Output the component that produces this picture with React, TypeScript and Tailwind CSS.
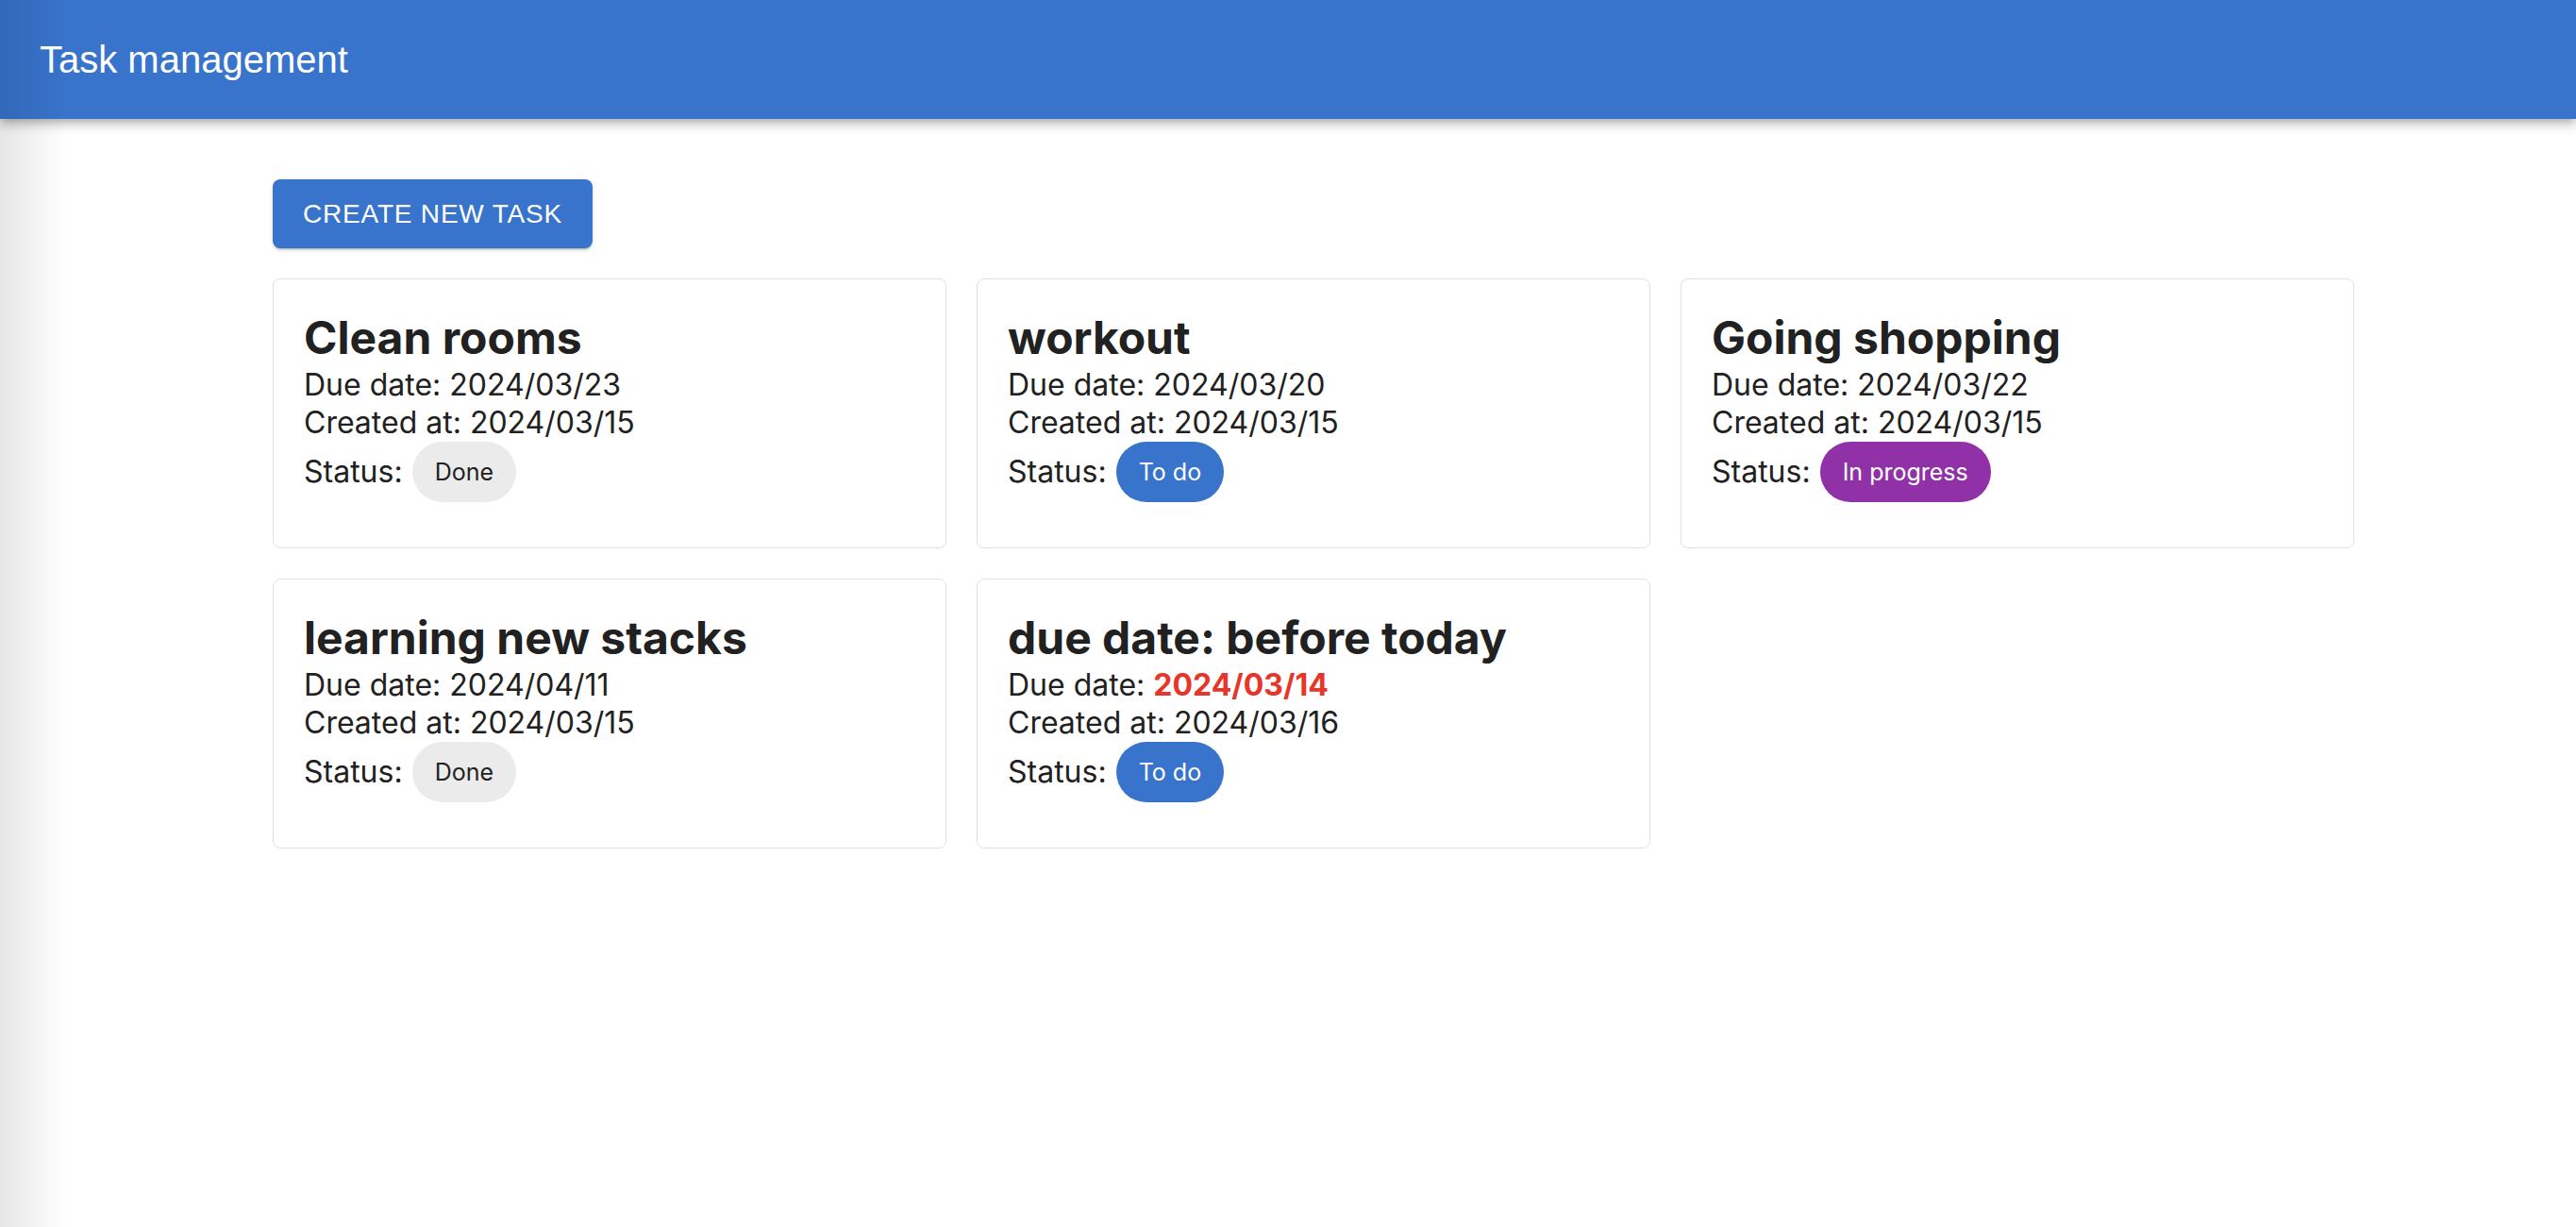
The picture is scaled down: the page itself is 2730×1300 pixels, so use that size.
type Status = 'Done' | 'To do' | 'In progress'

type Task = {
  title: string
  due: string
  created: string
  status: Status
  overdue?: boolean
}

const tasks: Task[] = [
  { title: 'Clean rooms', due: '2024/03/23', created: '2024/03/15', status: 'Done' },
  { title: 'workout', due: '2024/03/20', created: '2024/03/15', status: 'To do' },
  { title: 'Going shopping', due: '2024/03/22', created: '2024/03/15', status: 'In progress' },
  { title: 'learning new stacks', due: '2024/04/11', created: '2024/03/15', status: 'Done' },
  { title: 'due date: before today', due: '2024/03/14', created: '2024/03/16', status: 'To do', overdue: true },
]

const chipStyles: Record<Status, string> = {
  'Done': 'bg-[#ebebeb] text-[#212121]',
  'To do': 'bg-[#3874cc] text-white',
  'In progress': 'bg-[#9131a8] text-white',
}

function StatusChip({ status }: { status: Status }) {
  return (
    <span className={`inline-flex h-16 items-center rounded-full px-6 text-[25px] leading-none ${chipStyles[status]}`}>
      {status}
    </span>
  )
}

function TaskCard({ task }: { task: Task }) {
  return (
    <div className="rounded-lg border border-[#e0e0e0] bg-white px-8 pt-8 pb-12">
      <h2 className="text-[48px] font-bold leading-[60px] text-[#212121]">{task.title}</h2>
      <p className="text-[32px] leading-[40px]">
        Due date:{' '}
        {task.overdue ? (
          <span className="font-bold text-[#e8352a]">{task.due}</span>
        ) : (
          task.due
        )}
      </p>
      <p className="text-[32px] leading-[40px]">Created at: {task.created}</p>
      <div className="flex items-center gap-[10px] text-[32px] leading-[40px]">
        <span>Status:</span>
        <StatusChip status={task.status} />
      </div>
    </div>
  )
}

export default function App() {
  return (
    <div className="relative min-h-screen bg-white font-['Inter',sans-serif] text-[#212121]">
      <header className="relative z-10 flex h-[126px] items-center bg-[#3874cc] px-[42px] shadow-[0_4px_8px_-2px_rgba(0,0,0,0.25),0_8px_10px_1px_rgba(0,0,0,0.12)]">
        <h1 className="font-['Liberation_Sans',Arial,sans-serif] text-[40px] text-white">Task management</h1>
      </header>

      <main className="pt-16 pl-[289px] pr-[235px]">
        <button className="h-[73px] rounded-lg bg-[#3874cc] px-8 font-['Liberation_Sans',Arial,sans-serif] text-[28px] uppercase tracking-[0.8px] text-white shadow-[0_3px_2px_-2px_rgba(0,0,0,0.25),0_2px_4px_rgba(0,0,0,0.14)]">
          Create new task
        </button>

        <section className="mt-8 grid grid-cols-3 gap-8">
          {tasks.map((t) => (
            <TaskCard key={t.title} task={t} />
          ))}
        </section>
      </main>

      <div className="pointer-events-none fixed inset-y-0 left-0 z-20 w-[70px] bg-linear-to-r from-black/10 to-transparent" />
    </div>
  )
}
